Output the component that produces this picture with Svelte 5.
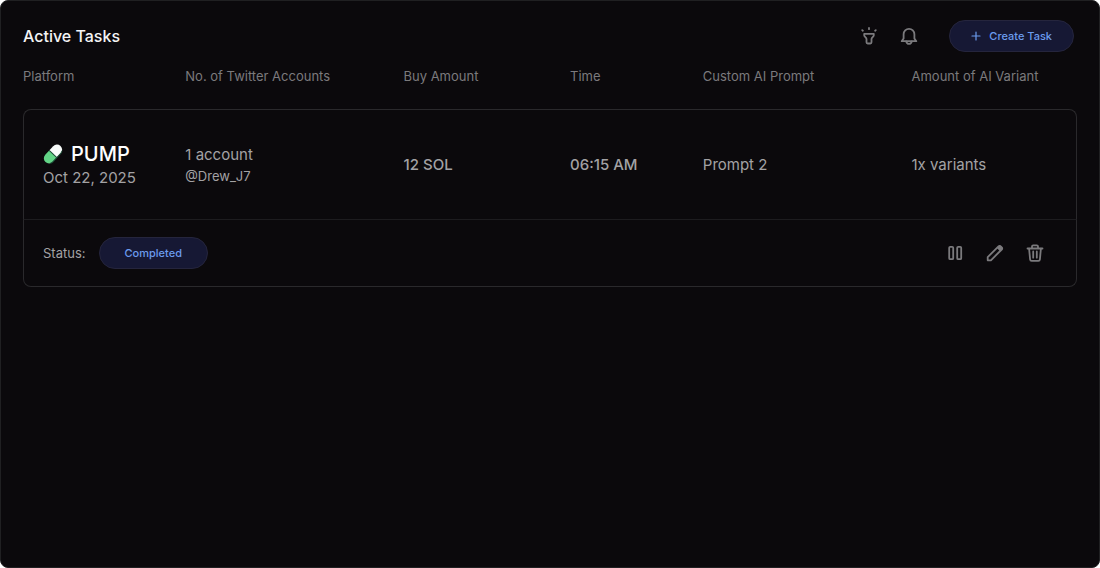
<script>
    let tasks = $state([
        {
            id: 1,
            platform: 'PUMP',
            date: 'Oct 22, 2025',
            accounts: '1 account',
            handle: '@Drew_J7',
            amount: '12 SOL',
            time: '06:15 AM',
            prompt: 'Prompt 2',
            variants: '1x variants',
            status: 'Completed'
        }
    ]);

    const columns = [
        'Platform',
        'No. of Twitter Accounts',
        'Buy Amount',
        'Time',
        'Custom AI Prompt',
        'Amount of AI Variant'
    ];

    function removeTask(id) {
        tasks = tasks.filter((task) => task.id !== id);
    }
</script>

<main class="panel">
    <header class="top-bar">
        <h1>Active Tasks</h1>
        <div class="top-actions">
            <button class="icon-button" aria-label="Toggle light">
                <svg width="20" height="20" viewBox="0 0 20 20">
                    <path d="M5.2 7.800h9.600v1.500c0 1.500-2.300 2.300-2.300 3.800v3.200c0 .8-.4 1.200-1.200 1.200H8.700c-.8 0-1.200-.4-1.200-1.200v-3.200c0-1.500-2.300-2.300-2.300-3.800z" />
                    <path d="M10 1.900v1.300M3.200 4.100l.7.600M16.800 4.100l-.7.600" />
                </svg>
            </button>
            <button class="icon-button" aria-label="Notifications">
                <svg width="20" height="20" viewBox="0 0 20 20">
                    <path d="M4.600 12.400V8.200a5.400 5.400 0 0 1 10.800 0v4.200l1.900 2.800H2.700z" />
                    <path d="M7.200 15.400c.4 1.500 1.500 2.400 2.800 2.400s2.400-.9 2.800-2.400" />
                </svg>
            </button>
            <button class="pill create">
                <svg width="10" height="10" viewBox="0 0 10 10">
                    <path d="M5 1v8M1 5h8" />
                </svg>
                Create Task
            </button>
        </div>
    </header>

    <table>
        <thead>
            <tr>
                {#each columns as column}
                    <th scope="col">{column}</th>
                {/each}
            </tr>
        </thead>
        {#each tasks as task (task.id)}
            <tbody>
                <tr class="details">
                    <td>
                        <div class="platform">
                            <svg width="20" height="20" viewBox="0 0 20 20">
                                <g transform="rotate(-47 10 10)">
                                    <path class="pill-green" d="M10 4.800H4.200a5.200 5.200 0 0 0 0 10.400H10z" />
                                    <path class="pill-white" d="M10 4.800h5.800a5.200 5.200 0 0 1 0 10.400H10z" />
                                    <path class="pill-shade" d="M1.500 14.300c.8.600 1.700.9 2.700.9h11.600c1 0 1.900-.3 2.700-.9" />
                                    <path class="pill-seam" d="M10 4.800v10.400" />
                                </g>
                            </svg>
                            {task.platform}
                        </div>
                        <div class="date">{task.date}</div>
                    </td>
                    <td>
                        <div class="accounts">{task.accounts}</div>
                        <div class="handle">{task.handle}</div>
                    </td>
                    <td class="strong">{task.amount}</td>
                    <td class="strong">{task.time}</td>
                    <td>{task.prompt}</td>
                    <td>{task.variants}</td>
                </tr>
                <tr class="footer">
                    <td colspan="6">
                        <div class="footer-row">
                            <span class="status-label">Status:</span>
                            <span class="pill status">{task.status}</span>
                            <div class="row-actions">
                                <button class="icon-button" aria-label="Pause task">
                                    <svg width="20" height="20" viewBox="0 0 20 20">
                                        <rect x="4.200" y="3.800" width="4" height="12.400" rx="1" />
                                        <rect x="12.200" y="3.800" width="4" height="12.400" rx="1" />
                                    </svg>
                                </button>
                                <button class="icon-button" aria-label="Edit task">
                                    <svg width="20" height="20" viewBox="0 0 20 20">
                                        <path d="M2.700 17.300v-3.200L13.500 3.300c.7-.7 1.500-.7 2.200 0l1 1c.7.700.7 1.500 0 2.200L5.900 17.300z" />
                                        <path class="fill" d="M11.800 5l2-2c.6-.6 1.400-.6 2 0l1.200 1.200c.6.6.6 1.400 0 2l-2 2z" />
                                    </svg>
                                </button>
                                <button class="icon-button" aria-label="Delete task" onclick={() => removeTask(task.id)}>
                                    <svg width="20" height="20" viewBox="0 0 20 20">
                                        <path d="M2.500 5.500h15M7 5.300V3.500c0-.8.4-1.200 1.200-1.200h3.600c.8 0 1.200.4 1.200 1.200v1.800" />
                                        <path d="M4.100 5.700l1 10.600c.1 1 .6 1.500 1.500 1.500h6.800c.9 0 1.400-.5 1.500-1.500l1-10.600M8.200 8.500v6.200M11.800 8.500v6.200" />
                                    </svg>
                                </button>
                            </div>
                        </div>
                    </td>
                </tr>
            </tbody>
        {/each}
    </table>
</main>

<style>
    :global(body) {
        background: #ffffff;
    }

    .panel {
        box-sizing: border-box;
        min-height: 100vh;
        padding: 19px 22px;
        background: #0b090c;
        border: 1px solid #202022;
        border-radius: 8px;
        font-family: Inter, "Liberation Sans", sans-serif;
        font-size: 15px;
        color: #a3a2a4;
    }

    .top-bar {
        display: flex;
        align-items: center;
        justify-content: space-between;
        padding-right: 3px;
    }

    h1 {
        margin: 0;
        font-size: 16px;
        font-weight: 500;
        line-height: 24px;
        color: #f4f4f5;
    }

    .top-actions,
    .row-actions {
        display: flex;
        align-items: center;
        gap: 20px;
    }

    button {
        font-family: inherit;
        cursor: pointer;
    }

    .icon-button {
        display: flex;
        padding: 0;
        background: none;
        border: none;
    }

    .icon-button svg {
        fill: none;
        stroke: #7b7a7d;
        stroke-width: 1.8;
        stroke-linecap: round;
        stroke-linejoin: round;
    }

    .icon-button .fill {
        fill: #7b7a7d;
        stroke: none;
    }

    .pill {
        display: flex;
        align-items: center;
        justify-content: center;
        box-sizing: border-box;
        height: 32px;
        background: #161834;
        border: 1px solid #25253d;
        border-radius: 16px;
        font-size: 11px;
        font-weight: 500;
        color: #6b9bee;
    }

    .create {
        gap: 8px;
        margin-left: 10px;
        padding: 0 21px;
    }

    .create svg {
        stroke: #6b9bee;
        stroke-width: 1.2;
        stroke-linecap: round;
    }

    table {
        width: 100%;
        table-layout: fixed;
        border-collapse: separate;
        border-spacing: 0;
    }

    th,
    td {
        padding: 0;
        text-align: left;
    }

    th {
        height: 57px;
        box-sizing: border-box;
        padding-bottom: 9px;
        font-size: 13px;
        font-weight: 400;
        color: #7b7a7d;
        white-space: nowrap;
    }

    th:nth-child(1) {
        width: 15.4%;
    }

    th:nth-child(2) {
        width: 20.7%;
    }

    th:nth-child(3) {
        width: 15.8%;
    }

    th:nth-child(4) {
        width: 12.6%;
    }

    th:nth-child(5) {
        width: 19.8%;
    }

    .details td {
        height: 109px;
        border-top: 1px solid #2a292c;
        border-bottom: 1px solid #1d1c1f;
        line-height: 22px;
    }

    .details td:first-child {
        padding-left: 19px;
        border-left: 1px solid #2a292c;
        border-top-left-radius: 8px;
    }

    .details td:last-child {
        border-right: 1px solid #2a292c;
        border-top-right-radius: 8px;
    }

    .platform {
        display: flex;
        align-items: center;
        gap: 8px;
        font-size: 20px;
        font-weight: 500;
        line-height: 26px;
        color: #ffffff;
    }

    .pill-green {
        fill: #62d486;
    }

    .pill-white {
        fill: #f8fbfa;
    }

    .pill-shade,
    .pill-seam {
        fill: none;
        stroke: #1d4d38;
        stroke-width: 1;
    }

    .handle {
        font-size: 13px;
        line-height: 20px;
    }

    .strong {
        font-weight: 500;
    }

    .footer td {
        height: 66px;
        border: 1px solid #2a292c;
        border-top: none;
        border-radius: 0 0 8px 8px;
    }

    .footer-row {
        display: flex;
        align-items: center;
        padding: 0 31px 0 19px;
    }

    .status-label {
        margin-right: 13px;
        font-size: 13px;
    }

    .status {
        padding: 0 25px;
    }

    .row-actions {
        margin-left: auto;
    }
</style>
